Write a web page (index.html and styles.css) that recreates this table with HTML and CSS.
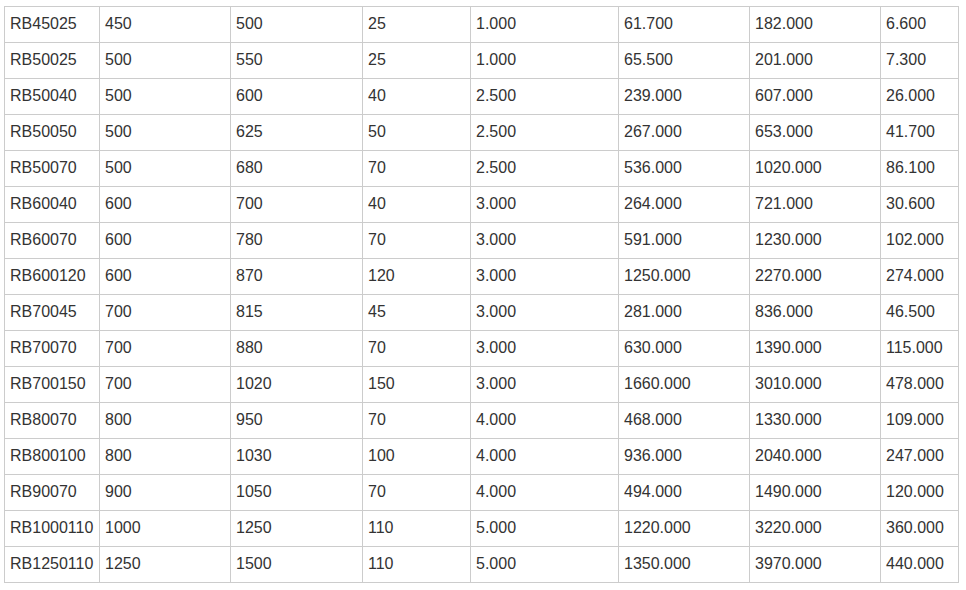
FILE: index.html
```html
<!DOCTYPE html>
<html>
<head>
<meta charset="utf-8">
<link rel="stylesheet" href="styles.css">
</head>
<body>
<table class="spec">
<colgroup>
<col class="c1"><col class="c2"><col class="c3"><col class="c4"><col class="c5"><col class="c6"><col class="c7"><col class="c8">
</colgroup>
<tbody>
<tr><td>RB45025</td><td>450</td><td>500</td><td>25</td><td>1.000</td><td>61.700</td><td>182.000</td><td>6.600</td></tr>
<tr><td>RB50025</td><td>500</td><td>550</td><td>25</td><td>1.000</td><td>65.500</td><td>201.000</td><td>7.300</td></tr>
<tr><td>RB50040</td><td>500</td><td>600</td><td>40</td><td>2.500</td><td>239.000</td><td>607.000</td><td>26.000</td></tr>
<tr><td>RB50050</td><td>500</td><td>625</td><td>50</td><td>2.500</td><td>267.000</td><td>653.000</td><td>41.700</td></tr>
<tr><td>RB50070</td><td>500</td><td>680</td><td>70</td><td>2.500</td><td>536.000</td><td>1020.000</td><td>86.100</td></tr>
<tr><td>RB60040</td><td>600</td><td>700</td><td>40</td><td>3.000</td><td>264.000</td><td>721.000</td><td>30.600</td></tr>
<tr><td>RB60070</td><td>600</td><td>780</td><td>70</td><td>3.000</td><td>591.000</td><td>1230.000</td><td>102.000</td></tr>
<tr><td>RB600120</td><td>600</td><td>870</td><td>120</td><td>3.000</td><td>1250.000</td><td>2270.000</td><td>274.000</td></tr>
<tr><td>RB70045</td><td>700</td><td>815</td><td>45</td><td>3.000</td><td>281.000</td><td>836.000</td><td>46.500</td></tr>
<tr><td>RB70070</td><td>700</td><td>880</td><td>70</td><td>3.000</td><td>630.000</td><td>1390.000</td><td>115.000</td></tr>
<tr><td>RB700150</td><td>700</td><td>1020</td><td>150</td><td>3.000</td><td>1660.000</td><td>3010.000</td><td>478.000</td></tr>
<tr><td>RB80070</td><td>800</td><td>950</td><td>70</td><td>4.000</td><td>468.000</td><td>1330.000</td><td>109.000</td></tr>
<tr><td>RB800100</td><td>800</td><td>1030</td><td>100</td><td>4.000</td><td>936.000</td><td>2040.000</td><td>247.000</td></tr>
<tr><td>RB90070</td><td>900</td><td>1050</td><td>70</td><td>4.000</td><td>494.000</td><td>1490.000</td><td>120.000</td></tr>
<tr><td>RB1000110</td><td>1000</td><td>1250</td><td>110</td><td>5.000</td><td>1220.000</td><td>3220.000</td><td>360.000</td></tr>
<tr><td>RB1250110</td><td>1250</td><td>1500</td><td>110</td><td>5.000</td><td>1350.000</td><td>3970.000</td><td>440.000</td></tr>
</tbody>
</table>
</body>
</html>
```
FILE: styles.css
```css
html, body {
  margin: 0;
  padding: 0;
  background: #ffffff;
}
body {
  padding: 6px 0 0 4px;
  font-family: "Liberation Sans", Arial, sans-serif;
  font-size: 16px;
  color: #333333;
}
.spec {
  border-collapse: collapse;
  table-layout: fixed;
  width: 955px;
}
.spec td {
  border: 1px solid #cccccc;
  height: 36px;
  padding: 0 0 2px 5px;
  vertical-align: middle;
  white-space: nowrap;
  box-sizing: border-box;
  line-height: 18px;
}
.c1 { width: 95px; }
.c2 { width: 131px; }
.c3 { width: 132px; }
.c4 { width: 108px; }
.c5 { width: 148px; }
.c6 { width: 131px; }
.c7 { width: 131px; }
.c8 { width: 78px; }
```
